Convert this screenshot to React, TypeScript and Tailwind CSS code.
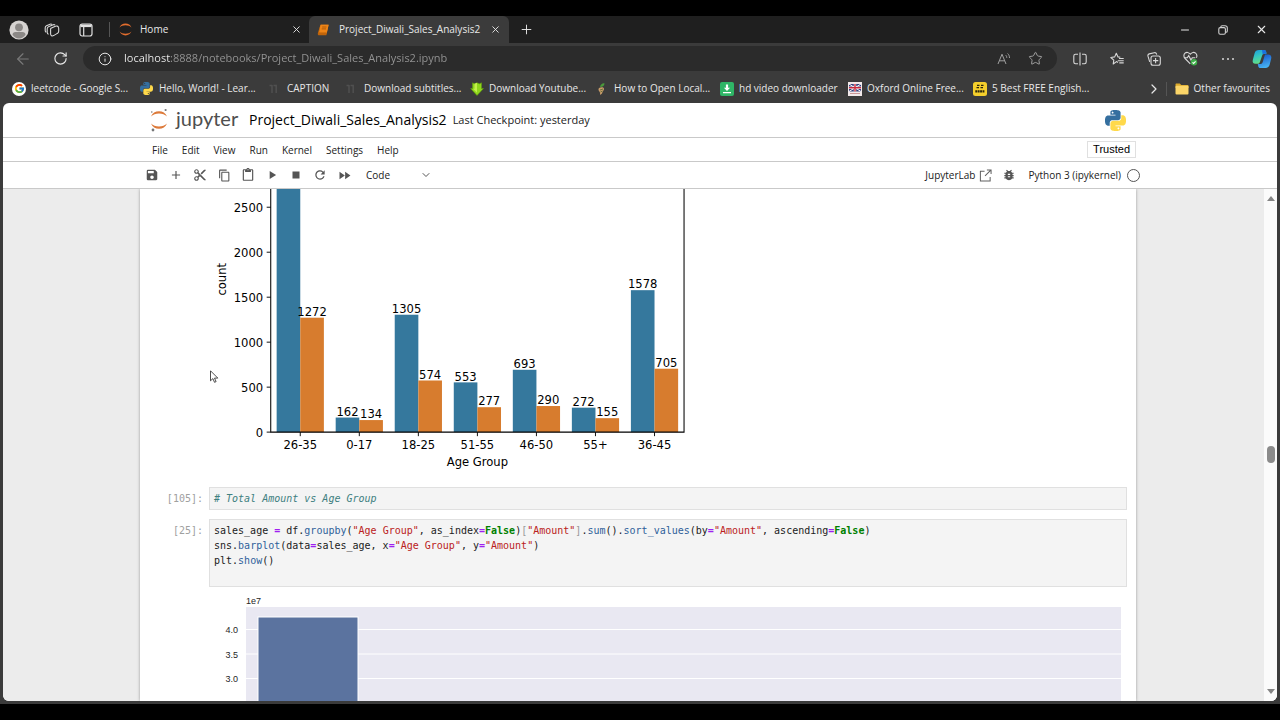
import { ReactNode } from 'react';
import clsx from 'clsx';
import { FcGoogle } from 'react-icons/fc';
import {
  MdAdd,
  MdBugReport,
  MdContentCopy,
  MdContentCut,
  MdContentPaste,
  MdFastForward,
  MdPlayArrow,
  MdRefresh,
  MdSave,
  MdStop,
} from 'react-icons/md';
import { ArrowLeft, ChevronDown, ChevronRight, Info, Minus, Plus, RotateCw, Star, X } from 'lucide-react';

const BOOKMARKS = [
  { label: 'leetcode - Google S...', icon: <FcGoogleBadge />, width: 'w-32' },
  { label: 'Hello, World! - Lear...', icon: <PythonLogo className="size-[13px]" />, width: 'w-32' },
  { label: 'CAPTION', icon: <DimIcon />, width: 'w-[77px]' },
  { label: 'Download subtitles...', icon: <DimIcon />, width: 'w-[125px]' },
  { label: 'Download Youtube...', icon: <GreenArrowIcon />, width: 'w-[125px]' },
  { label: 'How to Open Local...', icon: <LeafIcon />, width: 'w-[125px]' },
  { label: 'hd video downloader', icon: <DownloaderIcon />, width: 'w-32' },
  { label: 'Oxford Online Free...', icon: <FlagIcon />, width: 'w-[125px]' },
  { label: '5 Best FREE English...', icon: <FactIcon />, width: 'w-32' },
];

const MENUS = ['File', 'Edit', 'View', 'Run', 'Kernel', 'Settings', 'Help'];

const TOOLS = [
  { label: 'Save', icon: <MdSave size={14} /> },
  { label: 'Insert cell', icon: <MdAdd size={14} /> },
  { label: 'Cut', icon: <MdContentCut size={14} /> },
  { label: 'Copy', icon: <MdContentCopy size={13} /> },
  { label: 'Paste', icon: <MdContentPaste size={14} /> },
  { label: 'Run', icon: <MdPlayArrow size={14} /> },
  { label: 'Interrupt', icon: <MdStop size={14} /> },
  { label: 'Restart', icon: <MdRefresh size={14} /> },
  { label: 'Restart and run all', icon: <MdFastForward size={15} /> },
];

const AGE_COUNTS = [
  { group: '26-35', female: 3271, male: 1272 },
  { group: '0-17', female: 162, male: 134 },
  { group: '18-25', female: 1305, male: 574 },
  { group: '51-55', female: 553, male: 277 },
  { group: '46-50', female: 693, male: 290 },
  { group: '55+', female: 272, male: 155 },
  { group: '36-45', female: 1578, male: 705 },
];

// Icons

function FcGoogleBadge() {
  return (
    <span className="flex size-[14px] items-center justify-center rounded-full bg-white">
      <FcGoogle size={11} />
    </span>
  );
}

function PythonLogo({ className }: { className?: string }) {
  return (
    <svg viewBox="0 0 24 24" className={className} aria-hidden="true">
      <path
        fill="#356f9f"
        d="M14.25.18l.9.2.73.26.59.3.45.32.34.34.25.34.16.33.1.3.04.26.02.2-.01.13V8.5l-.05.63-.13.55-.21.46-.26.38-.3.31-.33.25-.35.19-.35.14-.33.1-.3.07-.26.04-.21.02H8.77l-.69.05-.59.14-.5.22-.41.27-.33.32-.27.35-.2.36-.15.37-.1.35-.07.32-.04.27-.02.21v3.06H3.17l-.21-.03-.28-.07-.32-.12-.35-.18-.36-.26-.36-.36-.35-.46-.32-.59-.28-.73-.21-.88-.14-1.05-.05-1.23.06-1.22.16-1.04.24-.87.32-.71.36-.57.4-.44.42-.33.42-.24.4-.16.36-.1.32-.05.24-.01h.16l.06.01h8.16v-.83H6.18l-.01-2.75-.02-.37.05-.34.11-.31.17-.28.25-.26.31-.23.38-.2.44-.18.51-.15.58-.12.64-.1.71-.06.77-.04.84-.02 1.27.05zm-6.3 1.98l-.23.33-.08.41.08.41.23.34.33.22.41.09.41-.09.33-.22.23-.34.08-.41-.08-.41-.23-.33-.33-.22-.41-.09-.41.09z"
      />
      <path
        fill="#ffd94a"
        d="M21.04 6.11l.28.06.32.12.35.18.36.27.36.35.35.47.32.59.28.73.21.88.14 1.04.05 1.23-.06 1.23-.16 1.04-.24.86-.32.71-.36.57-.4.45-.42.33-.42.24-.4.16-.36.09-.32.05-.24.02-.16-.01h-8.22v.82h5.84l.01 2.76.02.36-.05.34-.11.31-.17.29-.25.25-.31.24-.38.2-.44.17-.51.15-.58.13-.64.09-.71.07-.77.04-.84.01-1.27-.04-1.07-.14-.9-.2-.73-.25-.59-.3-.45-.33-.34-.34-.25-.34-.16-.33-.1-.3-.04-.25-.02-.2.01-.13v-5.34l.05-.64.13-.54.21-.46.26-.38.3-.32.33-.24.35-.2.35-.14.33-.1.3-.06.26-.04.21-.02.13-.01h5.84l.69-.05.59-.14.5-.21.41-.28.33-.32.27-.35.2-.36.15-.36.1-.35.07-.32.04-.28.02-.21V6.07h2.09l.14.01zm-6.47 14.25l-.23.33-.08.41.08.41.23.33.33.23.41.08.41-.08.33-.23.23-.33.08-.41-.08-.41-.23-.33-.33-.23-.41-.08-.41.08z"
      />
    </svg>
  );
}

function JupyterArcs({ className }: { className?: string }) {
  return (
    <svg viewBox="0 0 14 14" className={className} fill="#e46e2e" aria-hidden="true">
      <path d="M.6 4.8C1.6 2.3 4 .6 7 .6s5.400 1.700 6.400 4.200C11.900 3.300 9.600 2.400 7 2.400S2.100 3.300.6 4.800z" />
      <path d="M.6 9.200c1 2.500 3.400 4.200 6.400 4.200s5.400-1.700 6.400-4.200c-1.500 1.500-3.800 2.400-6.400 2.400s-4.900-.9-6.400-2.400z" />
    </svg>
  );
}

function JupyterLogo() {
  return (
    <svg viewBox="0 0 18 24" className="h-6 w-[18px]" aria-hidden="true">
      <path fill="#dd7a3a" d="M1 8.500C2.300 5.100 5.400 3.200 9 3.200s6.700 1.900 8 5.300c-2-2-4.800-3-8-3s-6 1-8 3z" />
      <path fill="#dd7a3a" d="M1 15.500c1.300 3.400 4.400 5.300 8 5.300s6.700-1.900 8-5.300c-2 2-4.800 3-8 3s-6-1-8-3z" />
      <circle cx="15.600" cy="2" r="1.100" fill="#767677" />
      <circle cx="1.800" cy="4" r="0.800" fill="#767677" />
      <circle cx="3" cy="22" r="1.400" fill="#767677" />
    </svg>
  );
}

function NotebookIcon() {
  return (
    <svg viewBox="0 0 14 14" className="size-3" aria-hidden="true">
      <path fill="#ee8416" d="M4 1h9.500l-2 9.500H2z" />
      <path fill="#c0640a" d="M4 1L1 10.500c-.3 1.500.3 2.700 1.500 2.700h8.400l.8-2.700-1-1H3z" />
      <path fill="#ee8416" d="M4.500 1h9l-2 8.500H2.500z" />
      <path stroke="#a85506" strokeWidth="1" d="M6 3.500h5M5.500 5.700h5" />
    </svg>
  );
}

function AvatarIcon() {
  return (
    <svg viewBox="0 0 20 20" className="size-5" aria-hidden="true">
      <circle cx="10" cy="10" r="9.600" fill="#d6d3d1" />
      <circle cx="10" cy="7.300" r="3.900" fill="#8b8886" />
      <path fill="#8b8886" d="M3.500 14.800c0-2 1.300-2.800 3-2.800h7c1.700 0 3 .8 3 2.800-1.500 2.400-3.800 3.700-6.500 3.700s-5-1.300-6.500-3.700z" />
    </svg>
  );
}

function WorkspacesIcon() {
  return (
    <svg viewBox="0 0 16 16" className="size-4" fill="none" stroke="#d8d8d8" strokeWidth="1.100" aria-hidden="true">
      <path d="M7 6.300L11.400 4.200c1.200-.5 2.600 0 3 1 .3.500.3 1 .3 1.500v2.600c0 1-.5 1.700-1.400 2.100L9.600 13.600c-1.600.8-3 .1-3-1.500V7.400c0-.5.100-.9.400-1.100z" />
      <path d="M4.600 12.300c-1-.2-1.400-.9-1.400-2V6.800c0-1 .4-1.700 1.300-2.100L8.600 2.900c1-.4 2-.3 2.500.3" />
      <path d="M2.300 10.300C1.600 10 1.200 9.400 1.200 8.500V5.800c0-1 .4-1.600 1.300-2L6 2.200c.8-.3 1.600-.2 2.100.3" />
    </svg>
  );
}

function TabActionsIcon() {
  return (
    <svg viewBox="0 0 14 14" className="size-[14px]" fill="none" stroke="#e0e0e0" strokeWidth="1.200" aria-hidden="true">
      <rect x="1" y="1" width="12" height="12" rx="2.200" />
      <path strokeWidth="2.600" d="M1.500 2.800h11" />
      <path d="M4.700 4v9" />
    </svg>
  );
}

function RestoreIcon() {
  return (
    <svg viewBox="0 0 10 10" className="size-[10px]" fill="none" stroke="#d0d0d0" strokeWidth="1.100" aria-hidden="true">
      <rect x="0.800" y="2.600" width="6.600" height="6.600" rx="1.400" />
      <path d="M2.800 2.400V2c0-.8.500-1.300 1.300-1.300h3C8.500.7 9.300 1.500 9.300 2.900v3c0 .8-.5 1.300-1.300 1.300h-.4" />
    </svg>
  );
}

function ReadAloudIcon() {
  return (
    <svg viewBox="0 0 14 14" className="size-[14px]" fill="none" stroke="#a0a0a0" aria-hidden="true">
      <path d="M1 12L5 2.200 9 12M2.300 8.800h5.400" />
      <path d="M8.800 3.200c.7.800 1 1.600 1 2.600M10.600 1.500c1.300 1.200 1.900 2.600 1.900 4.500" />
    </svg>
  );
}

function SplitIcon() {
  return (
    <svg viewBox="0 0 14 14" className="size-[14px]" fill="none" stroke="#d8d8d8" strokeWidth="1.100" aria-hidden="true">
      <path d="M5 2.200H2.500C1.500 2.200.8 2.900.8 3.900v6.200c0 1 .7 1.700 1.700 1.700H5M9 2.200h2.500c1 0 1.700.7 1.700 1.700v6.200c0 1-.7 1.700-1.700 1.700H9M7 .5v13" />
    </svg>
  );
}

function FavouritesIcon() {
  return (
    <svg viewBox="0 0 14 14" className="size-[14px]" fill="none" stroke="#d8d8d8" strokeWidth="1.100" aria-hidden="true">
      <path strokeLinejoin="round" d="M8 10.400l-1.500-.8L3.200 12l.6-3.800L.8 5.500l3.900-.6L6.300 1.200 8 4.900l2.300.3" />
      <path d="M9 6.500h4.700M7.800 8.700h5.900M9.300 10.900h4.400" />
    </svg>
  );
}

function CollectionsIcon() {
  return (
    <svg viewBox="0 0 14 14" className="size-[14px]" fill="none" stroke="#d8d8d8" strokeWidth="1.100" aria-hidden="true">
      <rect x="4" y="4" width="9.300" height="9.300" rx="2" />
      <path d="M8.600 6v5.300M6 8.600h5.300" />
      <path d="M2.700 9.800L1 4.200C.7 3.100 1.200 2.200 2.200 1.900L7.300.7c1-.2 1.900.3 2.200 1.200l.2.800" />
    </svg>
  );
}

function EssentialsIcon() {
  return (
    <svg viewBox="0 0 15 15" className="size-[15px]" fill="none" stroke="#d8d8d8" strokeWidth="1.100" aria-hidden="true">
      <path d="M7.300 12.800L2.100 7.500C.4 5.800.6 3.400 2 2.200c1.600-1.400 3.700-1 5.300 1 1.600-2 3.700-2.400 5.300-1 1.300 1.200 1.600 3 .8 4.600" />
      <path d="M1.500 6.700h2.800l1.400-2.200L8 9l1.300-2.300h3" />
      <circle cx="11" cy="11.300" r="3.200" fill="#3fae49" stroke="none" />
      <path stroke="#fff" d="M9.500 11.300l1.100 1.100 2-2" />
    </svg>
  );
}

function CopilotIcon() {
  return (
    <svg viewBox="0 0 20 20" className="size-5" aria-hidden="true">
      <defs>
        <linearGradient id="copilot-left" x1="0" y1="0" x2="0.300" y2="1">
          <stop offset="0" stopColor="#1a9be0" />
          <stop offset="0.500" stopColor="#35c6c0" />
          <stop offset="1" stopColor="#63dd86" />
        </linearGradient>
        <linearGradient id="copilot-right" x1="0.200" y1="0" x2="0.500" y2="1">
          <stop offset="0" stopColor="#1553c7" />
          <stop offset="1" stopColor="#49b6f5" />
        </linearGradient>
      </defs>
      <path fill="url(#copilot-right)" d="M13 5.500h3c2.500 0 3.800 1.500 3.200 4l-1.500 6c-.6 2.300-2 3.500-4.300 3.500H8.500c-1.400 0-2-.8-2.300-2.100L5.800 15H8c1.500 0 2.400-.8 2.800-2.300z" />
      <path fill="url(#copilot-left)" d="M7 1h5c1.400 0 2 .8 2.200 2l.3 1.800h-1.800c-1.400 0-2.300.8-2.700 2.300L8.300 12c-.5 2-1.400 2.800-3 2.800H3.500C1.200 14.800.2 13.300.8 11l1.800-6.800C3.200 2 4.700 1 7 1z" />
      <path fill="#1a6fe0" d="M10 1h2c1.400 0 2 .8 2.200 2l.3 1.800h-1.800c-1 0-1.600.4-2 1z" />
    </svg>
  );
}

function DimIcon() {
  return (
    <svg viewBox="0 0 12 14" className="h-[14px] w-3" fill="none" stroke="#505050" strokeWidth="1.500" aria-hidden="true">
      <path d="M1.500 3.500H4M4 3v8M5.500 3.500h2.700V11" />
    </svg>
  );
}

function GreenArrowIcon() {
  return (
    <svg viewBox="0 0 14 14" className="size-[14px]" aria-hidden="true">
      <path fill="#8fd61c" stroke="#5d9c0c" strokeWidth="0.600" d="M2.500.8L4.500 1.800 7 .8l2.500 1 2-1v5.700h2L7 13.500.6 6.500h1.900z" />
      <path fill="#c3f04b" d="M4.500 1.800L7 .8v10L3 6.800h1.500z" />
    </svg>
  );
}

function LeafIcon() {
  return (
    <svg viewBox="0 0 14 14" className="size-[14px]" aria-hidden="true">
      <path fill="#4a9a3a" d="M5 5c.5-3 2.500-4 4.500-3.700C9.500 3.500 8 5 5 5z" />
      <path fill="#c79b68" d="M4 6c2-1 4.500-1 5 .5.300 2-1.500 2.500-2 5L5.300 13l-.5-3C3.500 9 3 7 4 6z" />
      <path stroke="#67703a" d="M5 8l3-1M5.500 10l2-1" />
    </svg>
  );
}

function DownloaderIcon() {
  return (
    <svg viewBox="0 0 14 14" className="size-[14px]" aria-hidden="true">
      <rect width="14" height="14" rx="2" fill="#2fb566" />
      <path fill="#fff" d="M5.900 2.500h2.200v3.300h2L7 9 3.900 5.800h2zM3 10h8v1.300H3z" />
    </svg>
  );
}

function FlagIcon() {
  return (
    <svg viewBox="0 0 14 14" className="size-[14px]" aria-hidden="true">
      <rect width="14" height="14" fill="#f2e9ea" />
      <rect x="1" y="2" width="12" height="7.500" fill="#35407c" />
      <path stroke="#fff" strokeWidth="1" d="M1 2l12 7.500M13 2L1 9.500" />
      <path stroke="#fff" strokeWidth="2.400" d="M7 2v7.500M1 5.800h12" />
      <path stroke="#c8283c" strokeWidth="1.400" d="M7 2v7.500M1 5.800h12" />
      <path stroke="#c99" d="M2 11.500h10" />
    </svg>
  );
}

function FactIcon() {
  return (
    <svg viewBox="0 0 14 14" className="size-[14px]" aria-hidden="true">
      <rect width="14" height="14" rx="2.500" fill="#f5cf2c" />
      <path stroke="#2c260a" strokeWidth="1.200" d="M4 3.400h2.500M8 3.400h2.500M3.500 5.600H6M7.500 5.600H10" />
      <path stroke="#2c260a" strokeWidth="2.400" strokeDasharray="1.900 0.500" d="M2.300 9.400h9.600" />
    </svg>
  );
}

function FolderIcon() {
  return (
    <svg viewBox="0 0 14 14" className="size-[14px]" aria-hidden="true">
      <path fill="#dba92c" d="M.5 2.500c0-.6.400-1 1-1h3.300L6.300 3H12.500c.6 0 1 .4 1 1v2H.5z" />
      <rect x="0.500" y="3.800" width="13" height="8.700" rx="1" fill="#fbd568" />
    </svg>
  );
}

function LaunchIcon() {
  return (
    <svg viewBox="0 0 14 14" className="size-[13px]" fill="none" stroke="#616161" strokeWidth="1.100" aria-hidden="true">
      <path d="M6 2.500H1.500v10.500H12V8.500M8.500 1H13v4.500M13 1L6.500 7.500" />
    </svg>
  );
}

// Browser chrome

function IconButton({ label, className, children }: { label: string; className?: string; children: ReactNode }) {
  return (
    <button type="button" aria-label={label} className={clsx('flex shrink-0 items-center justify-center', className)}>
      {children}
    </button>
  );
}

function TabStrip() {
  return (
    <div className="flex h-[27px] items-stretch bg-[#1f1f1f] pl-2 text-[10px]">
      <IconButton label="Profile" className="w-[21px]">
        <AvatarIcon />
      </IconButton>
      <IconButton label="Workspaces" className="ml-[11px] w-6">
        <WorkspacesIcon />
      </IconButton>
      <IconButton label="Tab actions" className="ml-2.5 w-6">
        <TabActionsIcon />
      </IconButton>
      <div className="my-1.5 ml-[11px] w-px bg-[#555]" />
      <div className="flex w-[199px] items-center pr-[7px] pl-[9px]">
        <JupyterArcs className="size-[13px]" />
        <span className="ml-2 flex-1">Home</span>
        <IconButton label="Close tab" className="size-[11px]">
          <X size={11} />
        </IconButton>
      </div>
      <div className="flex w-[200px] items-center rounded-t-md bg-[#3b3b3b] pr-2 pl-2">
        <NotebookIcon />
        <span className="ml-2.5 flex-1">Project_Diwali_Sales_Analysis2</span>
        <IconButton label="Close tab" className="size-[11px]">
          <X size={11} />
        </IconButton>
      </div>
      <IconButton label="New tab" className="ml-[5px] w-6">
        <Plus size={15} strokeWidth={1.5} />
      </IconButton>
      <div className="ml-auto flex">
        <IconButton label="Minimize" className="w-[38px]">
          <Minus size={12} strokeWidth={2} />
        </IconButton>
        <IconButton label="Restore" className="w-[38px]">
          <RestoreIcon />
        </IconButton>
        <IconButton label="Close window" className="w-[38px]">
          <X size={13} strokeWidth={2} />
        </IconButton>
      </div>
    </div>
  );
}

function AddressRow() {
  return (
    <div className="flex items-center py-[3px] pr-2 pl-3">
      <IconButton label="Back" className="w-[22px] text-[#7a7a7a]">
        <ArrowLeft size={18} strokeWidth={1.5} />
      </IconButton>
      <IconButton label="Refresh" className="ml-[15px] w-[22px]">
        <RotateCw size={15} strokeWidth={1.8} />
      </IconButton>
      <div className="ml-3 flex h-[25px] flex-1 items-center rounded-full bg-[#2b2b2b] pr-3.5 pl-[15px]">
        <Info size={14} strokeWidth={1.7} />
        <input
          aria-label="Address"
          defaultValue="localhost:8888/notebooks/Project_Diwali_Sales_Analysis2.ipynb"
          className="ml-3 min-w-0 flex-1 bg-[linear-gradient(90deg,#f2f2f2_46px,#969696_46px)] bg-clip-text text-[11px] text-transparent outline-none"
        />
        <IconButton label="Read aloud" className="w-[33px]">
          <ReadAloudIcon />
        </IconButton>
        <IconButton label="Add to favourites" className="ml-2 text-[#a0a0a0]">
          <Star size={15} strokeWidth={1.6} />
        </IconButton>
      </div>
      <div className="ml-1 flex">
        <IconButton label="Split screen" className="w-[37px]">
          <SplitIcon />
        </IconButton>
        <IconButton label="Favourites" className="w-[37px]">
          <FavouritesIcon />
        </IconButton>
        <IconButton label="Collections" className="w-[37px]">
          <CollectionsIcon />
        </IconButton>
        <IconButton label="Browser essentials" className="w-[37px]">
          <EssentialsIcon />
        </IconButton>
        <IconButton label="Settings and more" className="w-[37px] gap-[3px]">
          <span className="size-0.5 rounded-full bg-[#d8d8d8]" />
          <span className="size-0.5 rounded-full bg-[#d8d8d8]" />
          <span className="size-0.5 rounded-full bg-[#d8d8d8]" />
        </IconButton>
        <IconButton label="Copilot" className="ml-1.5">
          <CopilotIcon />
        </IconButton>
      </div>
    </div>
  );
}

function BookmarksBar() {
  return (
    <nav aria-label="Bookmarks" className="flex h-[29px] items-center pr-2.5 pl-3 text-[10px] whitespace-nowrap">
      {BOOKMARKS.map(({ label, icon, width }) => (
        <a key={label} href="#" className={clsx('flex shrink-0 items-center', width)}>
          <span className="flex w-[19px] shrink-0">{icon}</span>
          {label}
        </a>
      ))}
      <div className="ml-auto flex items-center">
        <ChevronRight size={16} strokeWidth={1.8} />
        <div className="ml-1 h-3.5 w-px bg-[#555]" />
        <a href="#" className="ml-2 flex items-center">
          <span className="flex w-[19px] shrink-0">
            <FolderIcon />
          </span>
          Other favourites
        </a>
      </div>
    </nav>
  );
}

// Notebook

function NotebookHeader() {
  return (
    <header className="text-[10px]">
      <div className="border-b border-[#c9c9c9] pr-1">
        <div className="mx-auto flex h-[34px] max-w-[996px] items-center pr-2.5 pl-2.5">
          <JupyterLogo />
          <span className="ml-2 w-[66px] pb-1 font-['Lato',sans-serif] text-[20px] leading-6 text-[#4e4e4e]">jupyter</span>
          <h1 className="ml-[7px] text-sm text-black">Project_Diwali_Sales_Analysis2</h1>
          <span className="ml-1.5 text-[11px]">Last Checkpoint: yesterday</span>
          <PythonLogo className="ml-auto size-[21px]" />
        </div>
      </div>
      <div className="border-b border-[#c9c9c9] pr-1">
        <div className="mx-auto flex h-[23px] max-w-[996px] items-center pl-[5px]">
          {MENUS.map((menu) => (
            <button key={menu} type="button" className="px-[7px] pt-0.5">
              {menu}
            </button>
          ))}
          <button
            type="button"
            className="ml-auto h-[17px] border border-[#e0e0e0] px-[5px] font-['Liberation_Sans',sans-serif] text-[11px] leading-[15px] text-black"
          >
            Trusted
          </button>
        </div>
      </div>
      <div className="border-b border-[#c9c9c9] pr-1">
        <div className="mx-auto flex h-[26px] max-w-[996px] items-center">
          {TOOLS.map(({ label, icon }) => (
            <IconButton key={label} label={label} className="h-6 w-6 text-[#555]">
              {icon}
            </IconButton>
          ))}
          <label className="relative ml-2.5 flex items-center">
            <select aria-label="Cell type" className="w-[66px] appearance-none bg-transparent outline-none">
              <option>Code</option>
              <option>Markdown</option>
              <option>Raw</option>
            </select>
            <ChevronDown size={12} className="pointer-events-none absolute right-0 text-[#555]" />
          </label>
          <div className="-mr-1 ml-auto flex items-center">
            <a href="#" className="flex items-center gap-1">
              JupyterLab
              <LaunchIcon />
            </a>
            <IconButton label="Debugger" className="mr-2 ml-1.5 w-[22px] text-[#555]">
              <MdBugReport size={14} />
            </IconButton>
            <button type="button" className="flex items-center gap-1.5">
              Python 3 (ipykernel)
              <span className="size-[13px] rounded-full border border-[#555]" />
            </button>
          </div>
        </div>
      </div>
    </header>
  );
}

// Drawn in points: the axes are 357 wide and 500 people are 38.850 high
function CountPlot() {
  const left = 49;
  const base = 210;
  const step = 51;
  const barWidth = 20.4;
  const y = (count: number) => base - count * 0.0777;

  return (
    <svg
      viewBox="0 0 412 246"
      className="ml-[74px] w-[477px] max-w-full font-['DejaVu_Sans',sans-serif]"
      fontSize="10"
      role="img"
      aria-label="Count by age group"
    >
      {AGE_COUNTS.map(({ group, female, male }, i) => {
        const center = left + step * (i + 0.5);
        return (
          <g key={group} textAnchor="middle">
            <rect x={center - barWidth} y={y(female)} width={barWidth} height={base - y(female)} fill="#35789d" />
            <rect x={center} y={y(male)} width={barWidth} height={base - y(male)} fill="#d77c2e" />
            {female < 2700 && (
              <text x={center - barWidth / 2} y={y(female) - 1.5}>
                {female}
              </text>
            )}
            <text x={center + barWidth / 2} y={y(male) - 1.5}>
              {male}
            </text>
            <path d={`M${center} ${base}v3.500`} stroke="#000" strokeWidth="0.800" />
            <text x={center} y={base + 15}>
              {group}
            </text>
          </g>
        );
      })}
      {[0, 500, 1000, 1500, 2000, 2500].map((tick) => (
        <g key={tick} textAnchor="end">
          <path d={`M${left} ${y(tick)}h-3.500`} stroke="#000" strokeWidth="0.800" />
          <text x={left - 6.5} y={y(tick) + 4}>
            {tick}
          </text>
        </g>
      ))}
      <path d={`M${left} 0V${base}H${left + 357}V0`} fill="none" stroke="#000" strokeWidth="0.900" />
      <text x={left + 178.5} y="239" textAnchor="middle">
        Age Group
      </text>
      <text transform="translate(10.500 78) rotate(-90)" textAnchor="middle">
        count
      </text>
    </svg>
  );
}

function AmountPlot() {
  return (
    <svg
      viewBox="0 0 913 130"
      className="mt-[7px] ml-[74px] w-[913px] max-w-full font-['Liberation_Sans',sans-serif]"
      fontSize="9"
      fill="#262626"
      role="img"
      aria-label="Amount by age group"
    >
      <rect x="32" y="13" width="875" height="117" fill="#e9e8f2" />
      <text x="32" y="10">
        1e7
      </text>
      {['4.0', '3.5', '3.0', '2.5'].map((tick, i) => (
        <g key={tick}>
          <path d={`M32 ${35.5 + i * 24.5}h875`} stroke="#fff" />
          <text x="24" y={39 + i * 24.5} textAnchor="end">
            {tick}
          </text>
        </g>
      ))}
      <rect x="44" y="23" width="100" height="110" fill="#5b739f" stroke="#fff" />
    </svg>
  );
}

function Cell({ count, children }: { count: number; children: ReactNode }) {
  return (
    <div className="flex pr-[9px] font-['DejaVu_Sans_Mono',monospace] text-[10px] leading-[15px]">
      <div className="mr-1.5 w-[63px] shrink-0 py-1 text-right text-[#a0a0a0]">[{count}]:</div>
      <pre className="min-w-0 flex-1 overflow-hidden border border-[#e0e0e0] bg-[#f4f4f4] px-1 py-[3px] font-[inherit] text-[#212121]">
        <code className="font-[inherit]">{children}</code>
      </pre>
    </div>
  );
}

const Fn = ({ children }: { children: ReactNode }) => <span className="text-[#2f5f9a]">{children}</span>;
const Str = ({ children }: { children: ReactNode }) => <span className="text-[#ba2121]">{children}</span>;
const Eq = () => <span className="font-bold text-[#a020f0]">=</span>;
const False = () => <span className="font-bold text-[#008000]">False</span>;

function Scrollbar() {
  return (
    <div className="absolute inset-y-0 right-0 flex w-[13px] flex-col items-center bg-[#fbfbfb] py-[7px]">
      <svg viewBox="0 0 8 5" className="h-[5px] w-2" fill="#858585" aria-hidden="true">
        <path d="M0 5l4-5 4 5z" />
      </svg>
      <div className="grow-[52]" />
      <div className="h-[17px] w-2 rounded-full bg-[#8b8b8b]" />
      <div className="grow-[48]" />
      <svg viewBox="0 0 8 5" className="h-[5px] w-2" fill="#858585" aria-hidden="true">
        <path d="M0 0l4 5 4-5z" />
      </svg>
    </div>
  );
}

function Notebook() {
  return (
    <main className="relative min-h-0 flex-1 overflow-hidden bg-[#ececec] pr-1">
      <div className="mx-auto h-full max-w-[996px] overflow-hidden bg-white shadow-[0_0_3px_rgba(0,0,0,0.35)]">
        <CountPlot />
        <div className="mt-[13px] flex flex-col gap-[9px]">
          <Cell count={105}>
            <span className="text-[#408080] italic"># Total Amount vs Age Group</span>
          </Cell>
          <Cell count={25}>
            sales_age <Eq /> df.<Fn>groupby</Fn>(<Str>"Age Group"</Str>, as_index
            <Eq />
            <False />)<span className="text-[#999]">[</span>
            <Str>"Amount"</Str>
            <span className="text-[#999]">]</span>.<Fn>sum</Fn>().<Fn>sort_values</Fn>(by
            <Eq />
            <Str>"Amount"</Str>, ascending
            <Eq />
            <False />){'\n'}
            sns.<Fn>barplot</Fn>(data
            <Eq />
            sales_age, x<Eq />
            <Str>"Age Group"</Str>, y<Eq />
            <Str>"Amount"</Str>){'\n'}
            plt.<Fn>show</Fn>(){'\n '}
          </Cell>
        </div>
        <AmountPlot />
      </div>
      <svg viewBox="0 0 9 13" className="absolute top-[181px] left-[207px] h-[13px] w-[9px]" aria-hidden="true">
        <path fill="#fff" stroke="#222" strokeWidth="0.800" d="M.5.800v10l2.400-2.200 1.600 3.700 1.600-.7-1.600-3.500h3.300z" />
      </svg>
      <Scrollbar />
    </main>
  );
}

export default function App() {
  return (
    <div className="h-screen bg-black py-4 font-['Open_Sans','Noto_Sans',sans-serif] text-[#e8e8e8]">
      <div className="flex h-full flex-col bg-[#3b3b3b]">
        <TabStrip />
        <AddressRow />
        <BookmarksBar />
        <div className="mx-[3px] mb-[3px] flex min-h-0 flex-1 flex-col overflow-hidden rounded-md bg-white text-[#212121]">
          <NotebookHeader />
          <Notebook />
        </div>
      </div>
    </div>
  );
}
